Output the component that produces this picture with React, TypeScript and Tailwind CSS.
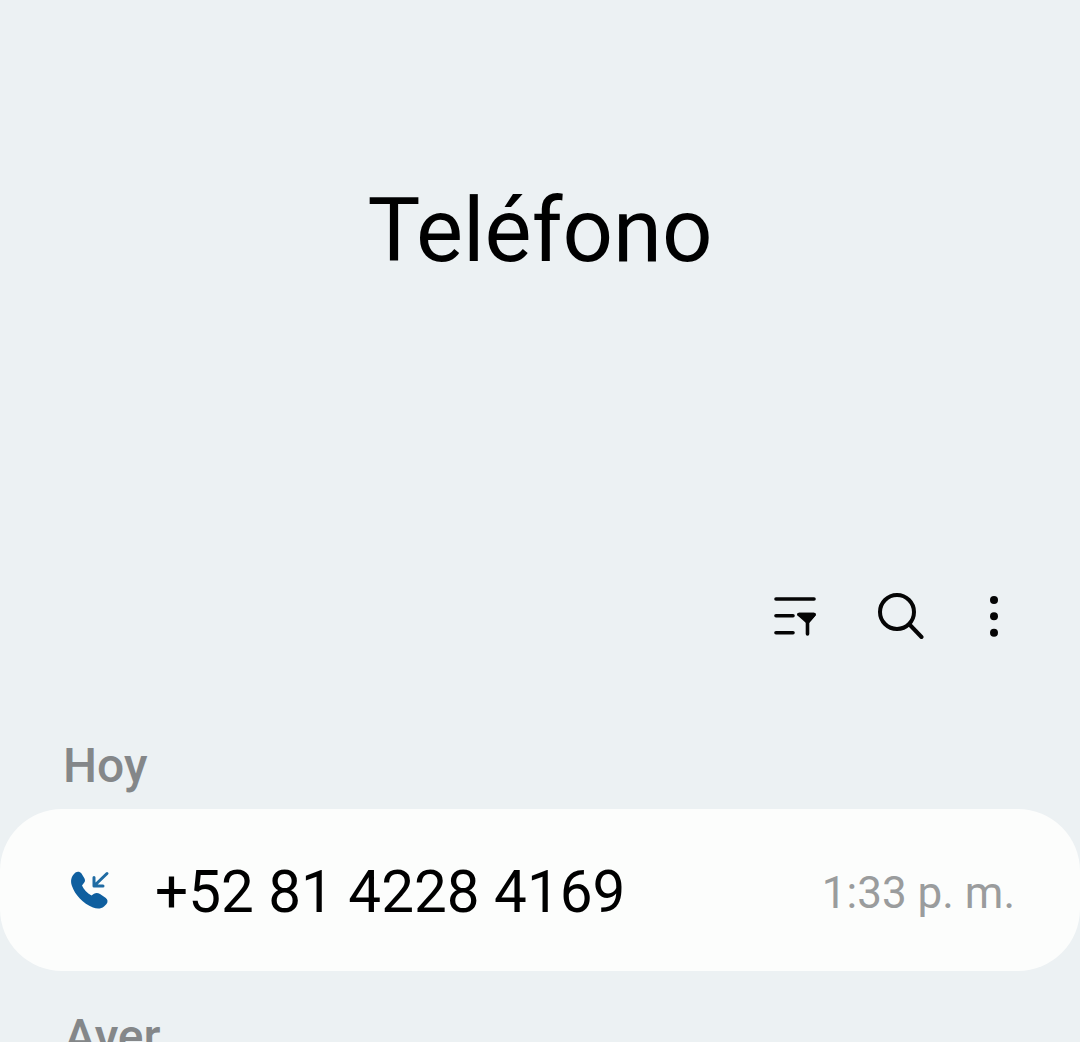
export default function App() {
  return (
    <div className="h-[1042px] w-[1080px] overflow-hidden bg-[#ecf1f3] font-['Roboto',sans-serif]">
      {/* Title */}
      <div className="flex h-[593px] justify-center pt-[178px]">
        <h1 className="text-[88.7px] leading-[106px] font-normal text-black">Teléfono</h1>
      </div>

      {/* Toolbar */}
      <div className="flex h-[48px] items-center justify-end pr-[80px]">
        <svg className="mr-[58px] h-[48px] w-[48px]" viewBox="0 0 48 48" fill="none" stroke="#050505" strokeWidth="3.6" strokeLinecap="round">
          <path d="M6 6H44" />
          <path d="M6 22.7H23" />
          <path d="M6 39.7H23" />
          <path d="M29 21.5H44L37.5 29V41" strokeLinejoin="round" />
          <path d="M29 21.5H44L37.5 29Z" strokeLinejoin="round" fill="#050505" />
        </svg>
        <svg className="mr-[64px] h-[48px] w-[48px]" viewBox="0 0 48 48" fill="none" stroke="#050505" strokeWidth="4" strokeLinecap="round">
          <circle cx="21" cy="19" r="17" />
          <path d="M33.5 31.5L45.5 44" />
        </svg>
        <svg className="h-[48px] w-[12px]" viewBox="0 0 12 48" fill="#050505">
          <circle cx="6" cy="7" r="4" />
          <circle cx="6" cy="23.3" r="4" />
          <circle cx="6" cy="39.7" r="4" />
        </svg>
      </div>

      {/* Calls */}
      <div className="pt-[99px] pl-[63px] text-[48px] leading-[52px] font-medium text-[#848789]">Hoy</div>
      <div className="mt-[17px] flex h-[162px] items-center justify-between rounded-[62px] bg-[#fcfdfc] pr-[65px] pl-[70px]">
        <div className="flex items-center">
          <svg className="h-[38px] w-[40px]" viewBox="0 0 40 38">
            <path
              d="M5.5 1.5C7.5 0 10 0.5 11.5 2.5L14.5 7.5C15.5 9.5 15 11 13.5 12.5L12 14.5C13.5 18 17 22 21.5 24.5L24 22.8C26 21.5 28 21.8 30 23L35.5 26.8C38 28.5 38 31 36.5 33L34 35.5C31 38 27 38 23 36.5C13 32.5 5 24 1.8 14.5C0.3 10 1 5 5.5 1.5Z"
              fill="#0f5f9f"
            />
            <path d="M37 2.5L24 15M24 6.5V15H33" fill="none" stroke="#1f6ba3" strokeWidth="3" strokeLinecap="round" strokeLinejoin="round" />
          </svg>
          <span className="mt-[4px] ml-[45px] text-[58.4px] leading-[66px] text-black">+52 81 4228 4169</span>
        </div>
        <span className="mt-[6px] text-[44px] leading-[52px] text-[#9a9c9d]">1:33 p. m.</span>
      </div>
      <div className="pt-[40px] pl-[64px] text-[48px] leading-[52px] font-medium text-[#848789]">Ayer</div>
    </div>
  );
}
